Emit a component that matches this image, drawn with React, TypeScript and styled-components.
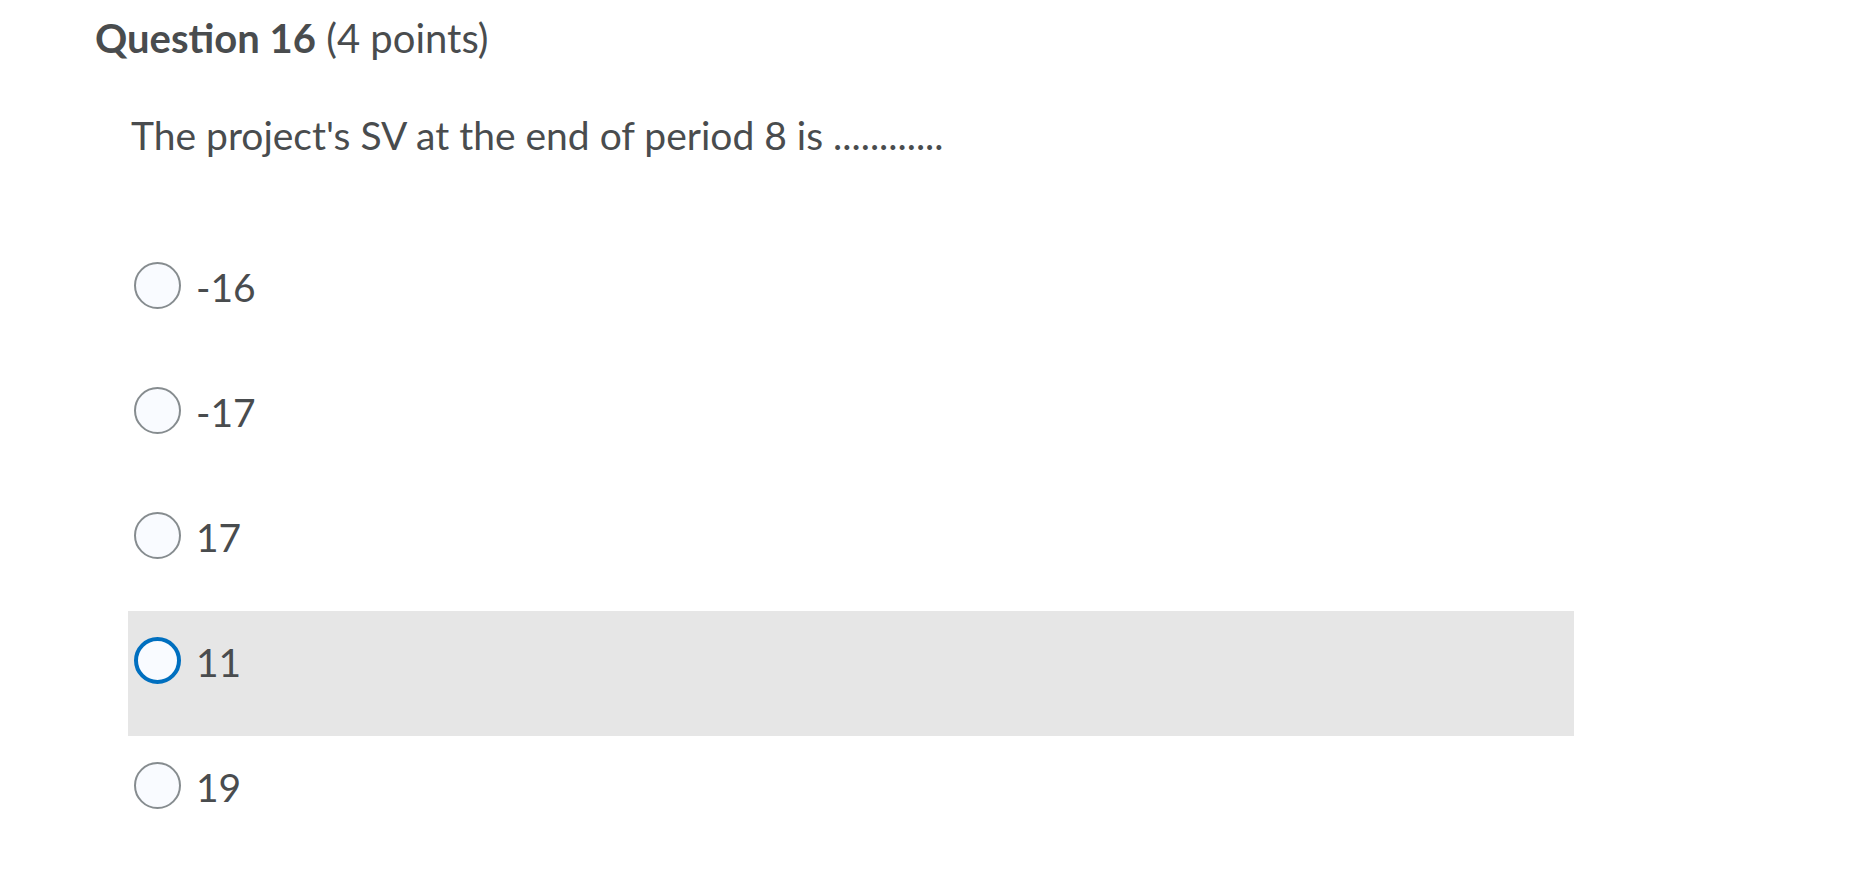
import React, { useState } from 'react'
import styled, { createGlobalStyle } from 'styled-components'

const GlobalStyle = createGlobalStyle`
  html, body {
    margin: 0;
    padding: 0;
    background: #ffffff;
  }
  body {
    font-family: Lato, "Open Sans", "Liberation Sans", sans-serif;
    color: #494c4e;
  }
`

// --- Styled Components ---
const Page = styled.main`
  width: 1876px;
  min-height: 876px;
  box-sizing: border-box;
  padding: 14px 0 0 95px;
`

const Title = styled.h2`
  margin: 0;
  font-size: 40px;
  line-height: 1.2;
  font-weight: 400;
  color: #494c4e;
`

const TitleStrong = styled.strong`
  font-weight: 700;
`

const Body = styled.section`
  padding-left: 33px;
  width: 1446px;
`

const Prompt = styled.p`
  margin: 50px 0 77px 3px;
  font-size: 39px;
  line-height: 1.2;
`

const Options = styled.div`
  display: flex;
  flex-direction: column;
`

const OptionRow = styled.label<{ $active?: boolean }>`
  display: flex;
  align-items: flex-start;
  height: 125px;
  box-sizing: border-box;
  padding: 26px 0 0 6px;
  background-color: ${(p) => (p.$active ? '#e6e6e6' : 'transparent')};
  cursor: pointer;
`

const Radio = styled.span<{ $active?: boolean }>`
  flex: none;
  width: 47px;
  height: 47px;
  box-sizing: border-box;
  border-radius: 50%;
  background: #f9fbff;
  border: ${(p) => (p.$active ? '4px solid #006fbf' : '2px solid #868c8f')};
`

const OptionText = styled.span`
  margin: 2px 0 0 15px;
  font-size: 39px;
  line-height: 1.2;
  color: #494c4e;
`

const answers = ['-16', '-17', '17', '11', '19']

export default function App() {
  const [selected, setSelected] = useState(3)

  return (
    <>
      <GlobalStyle />
      <Page>
        <Title>
          <TitleStrong>Question 16</TitleStrong> (4 points)
        </Title>
        <Body>
          <Prompt>The project's SV at the end of period 8 is ............</Prompt>
          <Options>
            {answers.map((a, i) => (
              <OptionRow key={a} $active={selected === i} onClick={() => setSelected(i)}>
                <Radio $active={selected === i} />
                <OptionText>{a}</OptionText>
              </OptionRow>
            ))}
          </Options>
        </Body>
      </Page>
    </>
  )
}
